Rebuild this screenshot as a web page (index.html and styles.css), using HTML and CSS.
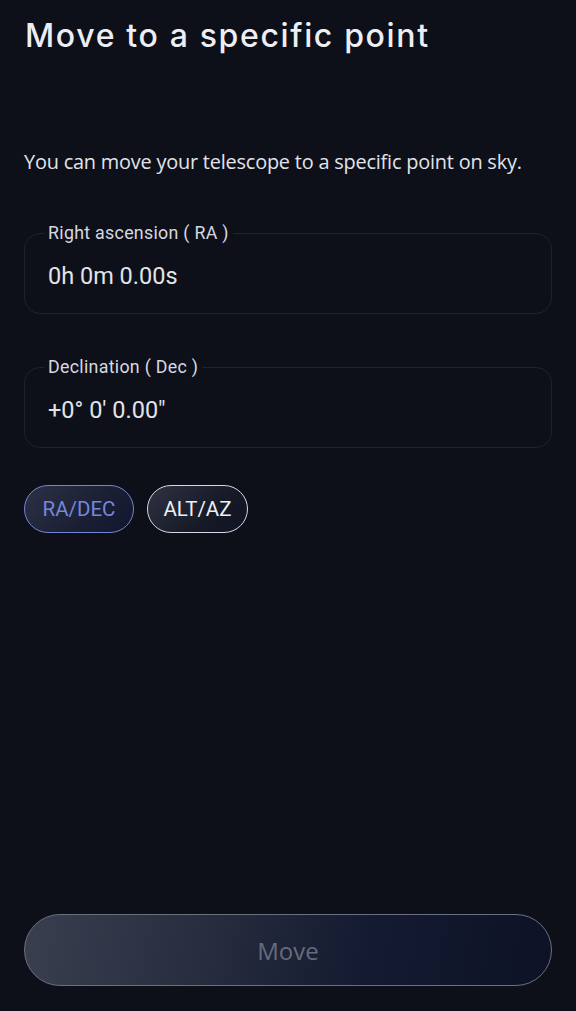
FILE: index.html
```html
<!DOCTYPE html>
<html lang="en">
<head>
<meta charset="utf-8">
<title>Move to a specific point</title>
<link rel="stylesheet" href="styles.css">
</head>
<body>
<main class="page">
  <h1 class="title">Move to a specific point</h1>
  <p class="intro">You can move your telescope to a specific point on sky.</p>

  <fieldset class="field field-ra">
    <legend class="field-label">Right ascension ( RA )</legend>
    <div class="field-value">0h 0m 0.00s</div>
  </fieldset>

  <fieldset class="field field-dec">
    <legend class="field-label">Declination ( Dec )</legend>
    <div class="field-value">+0° 0' 0.00"</div>
  </fieldset>

  <div class="chips">
    <button class="chip chip-active">RA/DEC</button>
    <button class="chip">ALT/AZ</button>
  </div>

  <div class="spacer"></div>

  <button class="move-btn">Move</button>
</main>
</body>
</html>
```

FILE: styles.css
```css
* { box-sizing: border-box; }

html, body {
  margin: 0;
  padding: 0;
  background: #0d1018;
}

.page {
  height: 1011px;
  padding: 0 24px 25px 24px;
  display: flex;
  flex-direction: column;
  font-family: Roboto, "Liberation Sans", sans-serif;
  color: #e4e6ec;
}

.title {
  margin: 14px 0 0 1px;
  font-family: Inter, "Open Sans", sans-serif;
  font-weight: 500;
  font-size: 32px;
  line-height: 44px;
  letter-spacing: 1.65px;
  color: #eceef4;
}

.intro {
  margin: 90px 0 0 0;
  font-family: "Open Sans", Roboto, sans-serif;
  font-size: 19.9px;
  line-height: 28px;
  letter-spacing: -0.2px;
  color: #e2e4ea;
}

.field {
  margin: 0;
  padding: 0 19px 22px 19px;
  border: 1px solid #1f232d;
  border-radius: 16px;
  min-width: 0;
}

.field-ra { margin-top: 46px; }
.field-dec { margin-top: 42px; }

.field-label {
  padding: 0 4px;
  font-size: 17.8px;
  line-height: 22px;
  letter-spacing: 0.3px;
  color: #d6d9e0;
}

.field-value {
  padding: 0 4px;
  margin-top: 17px;
  font-size: 23.5px;
  line-height: 30px;
  color: #e2e4ea;
}

.chips {
  display: flex;
  gap: 13px;
  margin-top: 37px;
}

.chip {
  height: 48px;
  padding: 0;
  border-radius: 24px;
  border: 1.5px solid #d6d9e2;
  background: linear-gradient(135deg, #2e3242 0%, #171b28 60%, #0f1322 100%);
  font-family: Roboto, "Liberation Sans", sans-serif;
  font-size: 20.5px;
  color: #eef0f5;
}

.chip-active {
  width: 110px;
  border-color: #7485cf;
  color: #7487dc;
  background: linear-gradient(135deg, #2c3146 0%, #1a1f33 60%, #111630 100%);
}

.chip:not(.chip-active) { width: 101px; }

.spacer { flex: 1; }

.move-btn {
  height: 72px;
  width: 100%;
  border-radius: 36px;
  border: 1.5px solid #6a7080;
  background: linear-gradient(100deg, #3a3f50 0%, #272c3e 35%, #141a30 65%, #0d1226 100%);
  font-family: "Open Sans", Roboto, sans-serif;
  font-size: 24px;
  color: #656b7c;
}
```
